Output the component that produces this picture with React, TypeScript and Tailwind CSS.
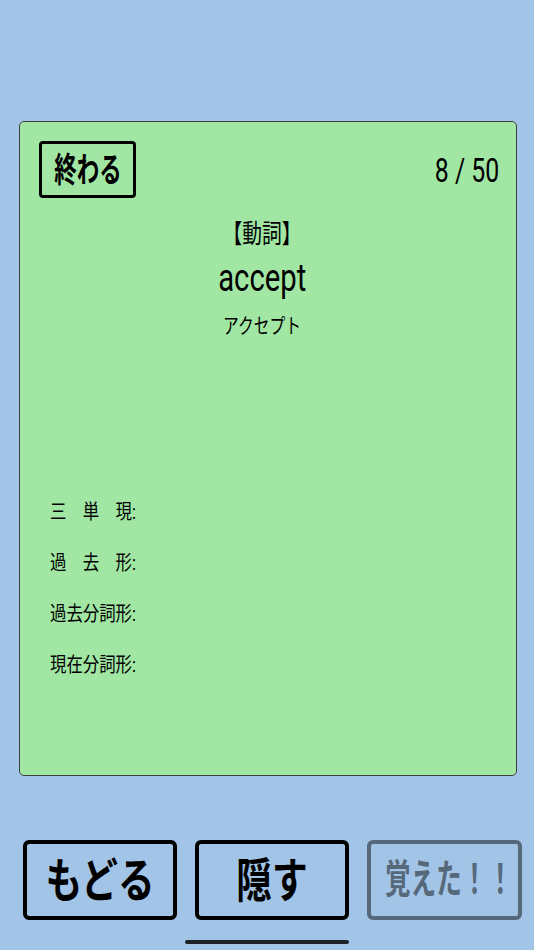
import React from "react";

const font = { fontFamily: 'Roboto, "Noto Sans CJK JP", sans-serif' };

export default function App() {
  const labels = ["三　単　現:", "過　去　形:", "過去分詞形:", "現在分詞形:"];
  return (
    <div
      className="w-[534px] h-[950px] bg-[#a2c4e6] flex flex-col items-center overflow-hidden text-black"
      style={font}
    >
      <div className="mt-[121px] ml-[2px] w-[498px] h-[655px] bg-[#a1e7a3] border border-[#3a3f3a] rounded-[5px] flex flex-col">
        <div className="flex items-start justify-between pl-[19px] pr-[17px] pt-[19px]">
          <div className="w-[97px] h-[57px] border-[3px] border-black rounded-[4px] flex items-center justify-center leading-none">
            <span className="inline-block whitespace-nowrap text-[34px] font-bold scale-x-[0.66]">終わる</span>
          </div>
          <div className="mt-[12px] text-[34px] leading-none">
            <span className="inline-block whitespace-nowrap origin-right scale-x-[0.73]">8 / 50</span>
          </div>
        </div>
        <div className="flex flex-col items-center pr-[12px]">
          <div className="mt-[23px] text-[26px] leading-none whitespace-nowrap">
            <span className="inline-block scale-x-[0.76]">【動詞】</span>
          </div>
          <div className="mt-[12px] text-[38px] leading-none whitespace-nowrap">
            <span className="inline-block scale-x-[0.77]">accept</span>
          </div>
          <div className="mt-[19px] text-[21px] leading-none whitespace-nowrap">
            <span className="inline-block scale-x-[0.75]">アクセプト</span>
          </div>
        </div>
        <div className="mt-[165px] pl-[30px] flex flex-col gap-[31px]">
          {labels.map((l) => (
            <div key={l} className="text-[20px] leading-[20px] whitespace-nowrap">
              <span className="inline-block origin-left scale-x-[0.82]">{l}</span>
            </div>
          ))}
        </div>
      </div>
      <div className="mt-[64px] w-full flex pl-[23px] gap-[18px]">
        <div className="w-[154px] h-[80px] border-4 border-black rounded-[6px] flex items-center justify-center leading-none">
          <span className="inline-block shrink-0 whitespace-nowrap text-[47px] font-bold scale-x-[0.78]">もどる</span>
        </div>
        <div className="w-[154px] h-[80px] border-4 border-black rounded-[6px] flex items-center justify-center leading-none">
          <span className="inline-block shrink-0 whitespace-nowrap text-[47px] font-bold scale-x-[0.76]">隠す</span>
        </div>
        <div className="w-[155px] h-[80px] border-4 border-[#56697b] rounded-[6px] flex items-center justify-center pl-[8px] leading-none text-[#56697b]">
          <span className="inline-block shrink-0 whitespace-nowrap text-[40px] font-bold scale-x-[0.64]">覚えた！！</span>
        </div>
      </div>
      <div className="mt-[20px] w-[164px] h-[4px] rounded-full bg-[#1e2328]" />
    </div>
  );
}
